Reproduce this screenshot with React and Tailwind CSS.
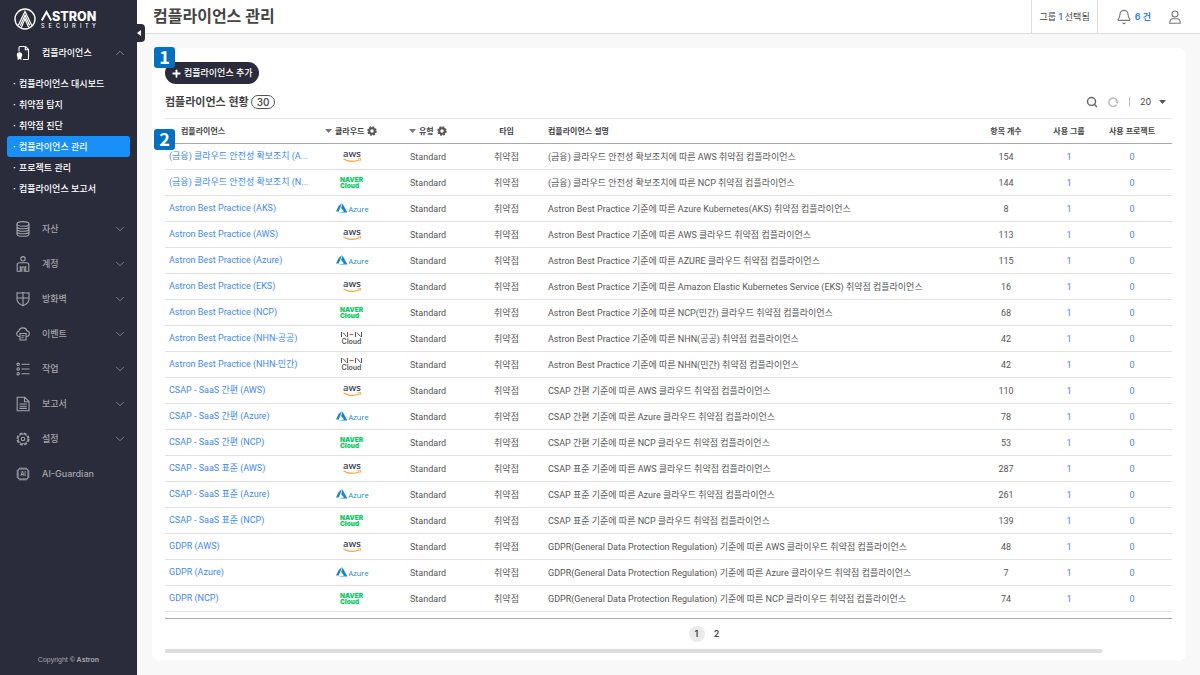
import { Bell, ChevronDown, ChevronUp, Plus, Search } from "lucide-react";

const submenu = [
  { label: "컴플라이언스 대시보드" },
  { label: "취약점 탐지" },
  { label: "취약점 진단" },
  { label: "컴플라이언스 관리", active: true },
  { label: "프로젝트 관리" },
  { label: "컴플라이언스 보고서" },
];

const menu = [
  { label: "자산", icon: DatabaseIcon },
  { label: "계정", icon: PersonIcon },
  { label: "방화벽", icon: ShieldIcon },
  { label: "이벤트", icon: CloudIcon },
  { label: "작업", icon: ListIcon },
  { label: "보고서", icon: ReportIcon },
  { label: "설정", icon: SettingIcon },
  { label: "AI-Guardian", icon: AiIcon, leaf: true },
];

const rows = [
  ["(금융) 클라우드 안전성 확보조치 (A...", "aws", "(금융) 클라우드 안전성 확보조치에 따른 AWS 취약점 컴플라이언스", 154],
  ["(금융) 클라우드 안전성 확보조치 (N...", "naver", "(금융) 클라우드 안전성 확보조치에 따른 NCP 취약점 컴플라이언스", 144],
  ["Astron Best Practice (AKS)", "azure", "Astron Best Practice 기준에 따른 Azure Kubernetes(AKS) 취약점 컴플라이언스", 8],
  ["Astron Best Practice (AWS)", "aws", "Astron Best Practice 기준에 따른 AWS 클라우드 취약점 컴플라이언스", 113],
  ["Astron Best Practice (Azure)", "azure", "Astron Best Practice 기준에 따른 AZURE 클라우드 취약점 컴플라이언스", 115],
  ["Astron Best Practice (EKS)", "aws", "Astron Best Practice 기준에 따른 Amazon Elastic Kubernetes Service (EKS) 취약점 컴플라이언스", 16],
  ["Astron Best Practice (NCP)", "naver", "Astron Best Practice 기준에 따른 NCP(민간) 클라우드 취약점 컴플라이언스", 68],
  ["Astron Best Practice (NHN-공공)", "nhn", "Astron Best Practice 기준에 따른 NHN(공공) 취약점 컴플라이언스", 42],
  ["Astron Best Practice (NHN-민간)", "nhn", "Astron Best Practice 기준에 따른 NHN(민간) 취약점 컴플라이언스", 42],
  ["CSAP - SaaS 간편 (AWS)", "aws", "CSAP 간편 기준에 따른 AWS 클라우드 취약점 컴플라이언스", 110],
  ["CSAP - SaaS 간편 (Azure)", "azure", "CSAP 간편 기준에 따른 Azure 클라우드 취약점 컴플라이언스", 78],
  ["CSAP - SaaS 간편 (NCP)", "naver", "CSAP 간편 기준에 따른 NCP 클라우드 취약점 컴플라이언스", 53],
  ["CSAP - SaaS 표준 (AWS)", "aws", "CSAP 표준 기준에 따른 AWS 클라우드 취약점 컴플라이언스", 287],
  ["CSAP - SaaS 표준 (Azure)", "azure", "CSAP 표준 기준에 따른 Azure 클라우드 취약점 컴플라이언스", 261],
  ["CSAP - SaaS 표준 (NCP)", "naver", "CSAP 표준 기준에 따른 NCP 클라우드 취약점 컴플라이언스", 139],
  ["GDPR (AWS)", "aws", "GDPR(General Data Protection Regulation) 기준에 따른 AWS 클라이우드 취약점 컴플라이언스", 48],
  ["GDPR (Azure)", "azure", "GDPR(General Data Protection Regulation) 기준에 따른 Azure 클라이우드 취약점 컴플라이언스", 7],
  ["GDPR (NCP)", "naver", "GDPR(General Data Protection Regulation) 기준에 따른 NCP 클라이우드 취약점 컴플라이언스", 74],
];

function Icon({ children, className = "size-4" }) {
  return (
    <svg className={className} viewBox="0 0 16 16" fill="none" stroke="currentColor" strokeWidth="1.1" aria-hidden="true">
      {children}
    </svg>
  );
}

function ComplianceIcon() {
  return (
    <Icon>
      <path d="M4 6.5V2.6Q4 1.5 5 1.5h5.5l3 3v9q0 1-1 1H8M10.3 1.5v3.2h3.2" />
      <circle cx="4.5" cy="10" r="2.7" fill="currentColor" stroke="none" />
      <path d="M2.6 11.5h3.8v3.6l-1.9-1-1.9 1z" fill="currentColor" stroke="none" />
    </Icon>
  );
}

function DatabaseIcon() {
  return (
    <Icon>
      <ellipse cx="8" cy="2.9" rx="6" ry="2.3" />
      <path d="M2 2.9v10c0 3.2 12 3.2 12 0v-10M2 5.4c0 3.1 12 3.1 12 0M2 7.9c0 3.1 12 3.1 12 0M2 10.4c0 3.1 12 3.1 12 0" />
    </Icon>
  );
}

function PersonIcon() {
  return (
    <Icon>
      <circle cx="8" cy="2.8" r="2.2" />
      <path d="M5.3 15.3H2.2V9Q2.2 6.8 4.4 6.8h7.2Q13.8 6.8 13.8 9v6.3h-3.1V10M5.3 15.3V10M5.300 15.3h1.5v-4.300h2.400v4.300h1.5" />
    </Icon>
  );
}

function ShieldIcon() {
  return (
    <Icon>
      <path d="M2 1.8q3 .6 6-.3 3 .9 6 .3V8q0 4.3-6 6.8Q2 12.3 2 8zM8 1.5v13.3M2 7h12" />
    </Icon>
  );
}

function CloudIcon() {
  return (
    <Icon>
      <path d="M4.5 10.5H4a2.7 2.7 0 0 1-.2-5.3 4.3 4.3 0 0 1 8.3-.2 2.8 2.8 0 0 1-.1 5.5h-.5M5 7.5h6V14H5zM6.5 9.7h3M6.5 11.7h2" />
    </Icon>
  );
}

function ListIcon() {
  return (
    <Icon>
      <circle cx="3.2" cy="3.3" r="1.2" />
      <circle cx="3.2" cy="8" r="1.2" />
      <circle cx="3.2" cy="12.7" r="1.2" />
      <path d="M6.5 3.3h8M6.5 8h8M6.5 12.7h8" />
    </Icon>
  );
}

function ReportIcon() {
  return (
    <Icon>
      <path d="M2.2 1.2h7.5L14 5.5v9.3H2.2zM9.5 1.2v4.5H14M4.5 8h7.2M4.5 10.2h7.2M4.5 12.4h7.2" />
    </Icon>
  );
}

function SettingIcon() {
  return (
    <Icon>
      <circle cx="8" cy="8" r="5.8" strokeWidth="1.4" strokeDasharray="3.1 1.455" />
      <circle cx="8" cy="8" r="4.8" strokeWidth="0.8" />
      <circle cx="8" cy="8" r="1.7" />
    </Icon>
  );
}

function AiIcon() {
  return (
    <Icon>
      <rect x="3" y="3" width="10" height="10" rx="1.5" />
      <path d="M5 1.5V3M7 1.5V3M9 1.5V3M11 1.5V3M5 13v1.5M7 13v1.5M9 13v1.5M11 13v1.5M1.5 5H3M1.5 7H3M1.5 9H3M1.5 11H3M13 5h1.5M13 7h1.5M13 9h1.5M13 11h1.5" />
      <text x="8" y="10" textAnchor="middle" fontSize="5.5" fontWeight="700" fill="currentColor" stroke="none">AI</text>
    </Icon>
  );
}

function UserIcon() {
  return (
    <Icon className="size-4 text-[#777]">
      <circle cx="8" cy="5" r="3" />
      <path d="M2.7 14.3q0-4.6 3.5-4.6h3.6q3.5 0 3.5 4.6z" />
    </Icon>
  );
}

function GearIcon() {
  return (
    <svg className="size-[10px] text-[#555]" viewBox="0 0 20 20" fill="none" stroke="currentColor" aria-hidden="true">
      <circle cx="10" cy="10" r="5.5" strokeWidth="4" />
      <circle cx="10" cy="10" r="8" strokeWidth="3" strokeDasharray="3.6 2.683" />
    </svg>
  );
}

function Caret({ className = "text-[#777]" }) {
  return (
    <svg className={`h-1 w-[7px] ${className}`} viewBox="0 0 7 4" fill="currentColor" aria-hidden="true">
      <path d="M0 0h7L3.5 4z" />
    </svg>
  );
}

function Logo() {
  return (
    <a href="#" aria-label="Astron Security" className="flex items-center gap-[5px] pl-[14px] pt-2 text-white">
      <svg className="size-[22px]" viewBox="0 0 22 22" fill="none" stroke="currentColor" aria-hidden="true">
        <circle cx="11" cy="11" r="10" strokeWidth="1.4" />
        <path d="M4.2 17.6L11 3.5l6.8 14.1M7.3 19.5L11 10.8l3.7 8.7M6.3 17.5L11 7.2l4.7 10.3" strokeWidth="1.2" />
      </svg>
      <svg className="h-[22px] w-[60px] overflow-visible" viewBox="0 0 60 22" aria-hidden="true">
        <path d="M.8 12.5L5.5 4l4.7 8.5" fill="none" stroke="currentColor" strokeWidth="2" />
        <text x="11" y="12.5" fontSize="12.5" fontWeight="800" fill="currentColor" fontFamily="Inter">STRON</text>
        <text y="20" fontSize="5.5" fontWeight="500" fill="currentColor" fontFamily="Inter" x="0 7.5 15 23 31 39 44 51">SECURITY</text>
      </svg>
    </a>
  );
}

function CloudLogo({ type }) {
  if (type === "aws") {
    return (
      <svg role="img" aria-label="aws" className="h-3 w-9 overflow-visible" viewBox="0 0 36 12">
        <text x="16" y="6" textAnchor="middle" fontSize="9.5" fontWeight="600" fill="#3b4554" fontFamily="'Open Sans'">aws</text>
        <path d="M7.500 8q8 4.500 15.800.8" fill="none" stroke="#f7a33a" strokeWidth="1.2" />
        <path d="M21.800 7.900l3-.3-.9 2.600" fill="none" stroke="#f7a33a" strokeWidth="0.9" />
      </svg>
    );
  }
  if (type === "azure") {
    return (
      <svg role="img" aria-label="Azure" className="h-3 w-9 overflow-visible" viewBox="0 0 36 12">
        <path d="M6 0L2.600 3 0 8.500h2.800zM6.500.4l4.900 9H2.500l5.500-1L5.100 4.900z" fill="#1787d0" />
        <text x="12.500" y="8.500" fontSize="7.500" fontWeight="500" fill="#1787d0" fontFamily="'Open Sans'">Azure</text>
      </svg>
    );
  }
  if (type === "naver") {
    return (
      <svg role="img" aria-label="NAVER Cloud" className="h-3 w-9 overflow-visible" viewBox="0 0 36 12">
        <text x="4" y="5" fontSize="6.5" fontWeight="900" fill="#0acb5f" fontFamily="Inter">NAVER</text>
        <text x="4" y="11" fontSize="6.5" fontWeight="900" fill="#0acb5f" fontFamily="Inter">Cloud</text>
      </svg>
    );
  }
  return (
    <svg role="img" aria-label="NHN Cloud" className="h-[14px] w-9 overflow-visible" viewBox="0 0 36 14">
      <path d="M5.5 0v5M7 .5l3.500 4M11.5 0v5M19.5 0v5M21 .5l3.500 4M25.5 0v5" fill="none" stroke="#555" />
      <path d="M13.500 2.500h4" stroke="#ef4444" />
      <text x="15.500" y="12" textAnchor="middle" fontSize="7" fontWeight="600" fill="#555" fontFamily="Inter">Cloud</text>
    </svg>
  );
}

function Sidebar() {
  return (
    <aside className="relative flex w-[137px] shrink-0 flex-col bg-[#2b2c3b]">
      <Logo />
      <button aria-label="메뉴 접기" className="absolute left-full top-6 flex h-[18px] w-2 items-center rounded-r-sm bg-[#2b2c3b]">
        <svg className="h-[6px] w-1" viewBox="0 0 4 6" fill="#fff" aria-hidden="true">
          <path d="M4 0v6L0 3z" />
        </svg>
      </button>
      <nav className="flex flex-1 flex-col">
        <button className="mt-[5px] flex h-[35px] items-center pl-[15px] pr-[10px] font-medium text-white">
          <ComplianceIcon />
          <span className="ml-[11px] flex-1 text-left">컴플라이언스</span>
          <ChevronUp className="size-[14px] text-[#999]" strokeWidth={1.3} />
        </button>
        <ul className="mt-[3px] px-[7px] font-medium text-white">
          {submenu.map((item) => (
            <li key={item.label}>
              <a href="#" className={item.active ? "flex h-[21px] items-center rounded-[3px] bg-[#1890f8] pl-[6px]" : "flex h-[21px] items-center pl-[6px]"}>
                <span className="w-[6px]">·</span>
                {item.label}
              </a>
            </li>
          ))}
        </ul>
        <div className="mt-3 flex flex-col">
          {menu.map(({ label, icon: MenuIcon, leaf }) => (
            <button key={label} className="flex h-[35px] items-center pl-[15px] pr-[10px] font-medium text-[#a3a4aa]">
              <MenuIcon />
              <span className="ml-[11px] flex-1 text-left">{label}</span>
              {!leaf && <ChevronDown className="size-[14px] text-[#999]" strokeWidth={1.3} />}
            </button>
          ))}
        </div>
      </nav>
      <p className="pb-[9px] text-center font-['Liberation_Sans',sans-serif] text-[7px] text-[#a3a4aa]">
        Copyright <b>© Astron</b>
      </p>
    </aside>
  );
}

function TopBar() {
  return (
    <header className="flex h-[34px] shrink-0 items-stretch border-b border-[#ddd] bg-white">
      <h1 className="flex-1 pl-4 text-base leading-8 font-semibold text-[#444]">컴플라이언스 관리</h1>
      <button className="border-x border-[#ddd] px-[7px]">
        그룹 <b className="font-semibold text-[#2f80ff]">1</b> 선택됨
      </button>
      <button className="flex items-center gap-[3px] pl-[18px] font-semibold text-[#2f80ff]">
        <Bell className="size-4 text-[#777]" strokeWidth={1.7} />6 건
      </button>
      <button aria-label="내 계정" className="pl-4 pr-[17px]">
        <UserIcon />
      </button>
    </header>
  );
}

function StepBadge({ children, className }) {
  return (
    <span className={`absolute flex size-[21px] items-center justify-center rounded-[3px] bg-[#0670c0] pb-[3px] font-['Noto_Sans_CJK_KR',sans-serif] text-lg leading-5 font-bold text-white ${className}`}>
      {children}
    </span>
  );
}

function ComplianceTable() {
  return (
    <table className="w-full table-fixed border-separate border-spacing-0">
      <colgroup>
        <col className="w-[159px]" />
        <col className="w-[84px]" />
        <col className="w-[67px]" />
        <col className="w-[63px]" />
        <col />
        <col className="w-[80px]" />
        <col className="w-[46px]" />
        <col className="w-[80px]" />
      </colgroup>
      <thead className="sticky top-0 z-10 bg-white text-[8px] text-[#444]">
        <tr className="h-[26px] *:border-t *:border-b *:border-t-[#e8e8e8] *:border-b-[#aaa] *:font-semibold">
          <th className="pl-4 text-left">컴플라이언스</th>
          <th>
            <span className="flex items-center gap-[3px] pl-px">
              <Caret />
              클라우드
              <GearIcon />
            </span>
          </th>
          <th>
            <span className="flex items-center gap-[3px] pl-px">
              <Caret />
              유형
              <GearIcon />
            </span>
          </th>
          <th>타입</th>
          <th className="pl-[10px] text-left">컴플라이언스 설명</th>
          <th>항목 개수</th>
          <th className="whitespace-nowrap">사용 그룹</th>
          <th>사용 프로젝트</th>
        </tr>
      </thead>
      <tbody className="font-['Roboto','Noto_Sans_CJK_KR',sans-serif] text-[#555]">
        {rows.map(([name, cloud, description, count]) => (
          <tr key={name} className="h-[26px] *:border-b *:border-[#e2e2e2]">
            <td className="pb-[2px] pl-1 whitespace-nowrap">
              <a href="#" className="text-[#4088f8]">{name}</a>
            </td>
            <td className="pl-3">
              <CloudLogo type={cloud} />
            </td>
            <td className="pl-[2px]">Standard</td>
            <td className="text-center">취약점</td>
            <td className="pl-[10px] whitespace-nowrap">{description}</td>
            <td className="text-center">{count}</td>
            <td className="text-center text-[#4088f8]">1</td>
            <td className="text-center text-[#4088f8]">0</td>
          </tr>
        ))}
      </tbody>
    </table>
  );
}

export default function App() {
  return (
    <div className="flex h-screen bg-[#f8f8f8] font-['Inter','Noto_Sans_CJK_KR',sans-serif] text-[9px] leading-3 text-[#444]">
      <Sidebar />
      <div className="flex min-w-0 flex-1 flex-col">
        <TopBar />
        <main className="mt-[14px] mr-[14px] mb-[14px] ml-[15px] flex min-h-0 flex-1 flex-col rounded-lg bg-white pt-[14px] pr-[14px] pb-2 pl-[13px]">
          <div className="relative">
            <StepBadge className="-top-[15px] -left-[11px]">1</StepBadge>
            <button className="flex h-[22px] items-center gap-[2px] rounded-full bg-[#2b2c3b] px-[6px] font-medium text-white">
              <Plus className="size-[11px]" strokeWidth={4} />
              컴플라이언스 추가
            </button>
          </div>
          <div className="flex h-[34px] items-center pt-px">
            <h2 className="text-[11px] font-semibold text-[#444]">컴플라이언스 현황</h2>
            <span className="ml-[2px] rounded-full border border-[#555] px-[5px] text-[10px] font-medium">30</span>
            <button aria-label="검색" className="ml-auto text-[#666]">
              <Search className="size-3" strokeWidth={3} />
            </button>
            <button aria-label="새로고침" className="ml-[9px] text-[#bbb]">
              <svg className="size-3" viewBox="0 0 12 12" fill="none" stroke="currentColor" strokeWidth="1.6" aria-hidden="true">
                <path d="M9.5 8.7A4.2 4.2 0 1 1 10.2 5.5" />
                <path d="M8 5.5h4L10.2 8z" fill="currentColor" stroke="none" />
              </svg>
            </button>
            <span className="mx-[10px] h-[10px] w-px bg-[#bbb]" />
            <div className="relative flex items-center pr-1">
              <select aria-label="페이지당 개수" defaultValue="20" className="w-[28px] appearance-none bg-transparent">
                <option>20</option>
                <option>50</option>
                <option>100</option>
              </select>
              <Caret className="pointer-events-none absolute right-[6px] text-[#555]" />
            </div>
          </div>
          <div className="relative flex min-h-0 flex-1 flex-col">
            <StepBadge className="top-[11px] -left-[11px] z-20">2</StepBadge>
            <div className="min-h-0 flex-1 overflow-auto border-b border-[#aaa] [scrollbar-width:none]">
              <ComplianceTable />
            </div>
          </div>
          <div className="overflow-hidden">
            <div className="flex h-[30px] w-[1083px] items-center justify-center gap-1 font-semibold">
              <button className="size-4 rounded-full bg-[#eaeaea]">1</button>
              <button className="size-4">2</button>
            </div>
          </div>
          <div className="h-1 w-[93%] bg-[#ddd]" />
        </main>
      </div>
    </div>
  );
}
